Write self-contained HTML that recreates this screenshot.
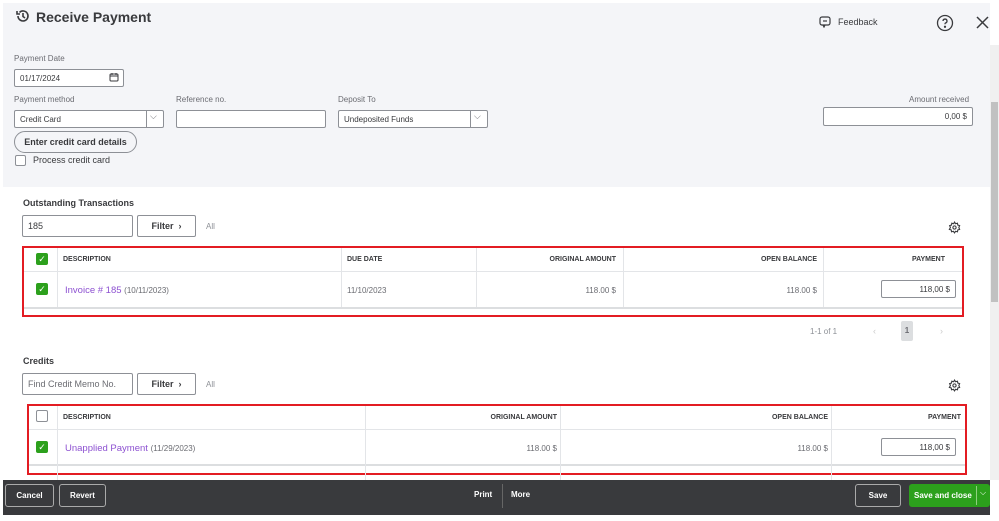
<!DOCTYPE html>
<html><head><meta charset="utf-8"><style>
*{box-sizing:border-box;margin:0;padding:0}
body{width:999px;height:521px;position:relative;overflow:hidden;background:#fff;font-family:"Liberation Sans",sans-serif;color:#393a3d}
.a{position:absolute}
.lbl{font-size:8px;color:#6b6c72}
.inp{position:absolute;background:#fff;border:1px solid #8d9096;border-radius:2px;font-size:8px;color:#393a3d;padding:0 5px;display:flex;align-items:center}
.th{font-size:7px;color:#393a3d;position:absolute;font-weight:bold}
.cb{position:absolute;width:12px;height:12px;border-radius:2px;background:#2ca01c;color:#fff;font-size:9px;line-height:12px;text-align:center}
.vl{position:absolute;width:1px;background:#e3e5e8}
.hl{position:absolute;height:1px;background:#e3e5e8}
.btn{position:absolute;border:1px solid #aaa;border-radius:3px;color:#fff;font-size:8px;font-weight:bold;display:flex;align-items:center;justify-content:center}
</style></head><body>
<div class="a" style="left:3px;top:3px;width:987px;height:184px;background:#f4f5f8"></div>
<div class="a" style="left:990px;top:45px;width:9px;height:435px;background:#f0f0f0"></div>
<div class="a" style="left:991px;top:102px;width:7px;height:200px;background:#c1c1c1"></div>
<svg class="a" style="left:15px;top:8px" width="16" height="16" viewBox="0 0 16 16" fill="none" stroke="#393a3d" stroke-width="1.6"><path d="M3 8a5 5 0 1 0 1.5-3.6"/><path d="M2 3v3h3"/><path d="M8 5v3.5l2 1.5"/></svg>
<div class="a" style="left:36px;top:9px;font-size:14px;font-weight:bold;color:#393a3d">Receive Payment</div>
<svg class="a" style="left:819px;top:16px" width="12" height="12" viewBox="0 0 12 12" fill="none" stroke="#393a3d" stroke-width="1.2"><rect x="1" y="1" width="10" height="8" rx="2"/><path d="M4 9l1 2 1-2"/><path d="M4 5h4"/></svg>
<div class="a" style="left:838px;top:17px;font-size:9px">Feedback</div>
<svg class="a" style="left:936px;top:14px" width="18" height="18" viewBox="0 0 18 18" fill="none" stroke="#393a3d" stroke-width="1.3"><circle cx="9" cy="9" r="7.5"/><path d="M7 7a2 2 0 1 1 2.5 2c-.5.2-.5.6-.5 1.2"/><circle cx="9" cy="12.8" r=".5" fill="#393a3d"/></svg>
<svg class="a" style="left:976px;top:16px" width="13" height="13" viewBox="0 0 13 13" stroke="#393a3d" stroke-width="1.5"><path d="M1 1l11 11M12 1L1 12"/></svg>

<div class="a lbl" style="left:14px;top:54px">Payment Date</div>
<div class="inp" style="left:14px;top:69px;width:110px;height:18px">01/17/2024</div>
<svg class="a" style="left:109px;top:72px" width="10" height="10" viewBox="0 0 10 10" fill="none" stroke="#393a3d"><rect x="1" y="2" width="8" height="7" rx="1"/><path d="M1 4h8M3 1v2M7 1v2"/></svg>
<div class="a lbl" style="left:14px;top:95px">Payment method</div>
<div class="inp" style="left:14px;top:110px;width:150px;height:18px">Credit Card</div>
<div class="a" style="left:146px;top:111px;width:1px;height:16px;background:#8d9096"></div>
<div class="a" style="left:150px;top:111px;font-size:9px;color:#6b6c72">⌵</div>
<div class="a lbl" style="left:176px;top:95px">Reference no.</div>
<div class="inp" style="left:176px;top:110px;width:150px;height:18px"></div>
<div class="a lbl" style="left:338px;top:95px">Deposit To</div>
<div class="inp" style="left:338px;top:110px;width:150px;height:18px">Undeposited Funds</div>
<div class="a" style="left:470px;top:111px;width:1px;height:16px;background:#8d9096"></div>
<div class="a" style="left:474px;top:111px;font-size:9px;color:#6b6c72">⌵</div>
<div class="a" style="left:14px;top:131px;width:123px;height:22px;border:1px solid #8d9096;border-radius:11px;font-size:9px;font-weight:bold;display:flex;align-items:center;justify-content:center;background:#f4f5f8">Enter credit card details</div>
<div class="a" style="left:15px;top:155px;width:11px;height:11px;border:1px solid #8d9096;border-radius:2px;background:#fff"></div>
<div class="a" style="left:33px;top:155px;font-size:9px">Process credit card</div>
<div class="a lbl" style="left:909px;top:95px">Amount received</div>
<div class="inp" style="left:823px;top:107px;width:150px;height:19px;justify-content:flex-end">0,00 $</div>

<div class="a" style="left:23px;top:198px;font-size:9px;font-weight:bold">Outstanding Transactions</div>
<div class="inp" style="left:22px;top:215px;width:111px;height:22px;font-size:9px">185</div>
<div class="inp" style="left:137px;top:215px;width:59px;height:22px;font-size:9px;justify-content:center;font-weight:bold">Filter &nbsp;›</div>
<div class="a" style="left:206px;top:222px;font-size:8px;color:#8d9096">All</div>
<svg class="a" style="left:948px;top:221px" width="13" height="13" viewBox="0 0 24 24" fill="none" stroke="#393a3d" stroke-width="2"><circle cx="12" cy="12" r="3"/><path d="M12 2l2 3 3.5-1 .5 3.5 3.5 1-1.5 3.5 1.5 3.5-3.5 1-.5 3.5-3.5-1-2 3-2-3-3.5 1-.5-3.5-3.5-1L4.5 12 3 8.5l3.5-1L7 4l3.5 1z"/></svg>
<div class="a" style="left:22px;top:246px;width:942px;height:71px;border:2px solid #e31c23"></div>
<div class="hl" style="left:24px;top:271px;width:938px"></div>
<div class="a" style="left:24px;top:307px;width:938px;height:2px;background:#dcdee0"></div>
<div class="vl" style="left:57px;top:248px;height:59px"></div>
<div class="vl" style="left:341px;top:248px;height:59px"></div>
<div class="vl" style="left:476px;top:248px;height:59px"></div>
<div class="vl" style="left:623px;top:248px;height:59px"></div>
<div class="vl" style="left:823px;top:248px;height:59px"></div>
<div class="cb" style="left:36px;top:253px">✓</div>
<div class="th" style="left:63px;top:256px">DESCRIPTION</div>
<div class="th" style="left:347px;top:256px">DUE DATE</div>
<div class="th" style="right:383px;top:256px">ORIGINAL AMOUNT</div>
<div class="th" style="right:182px;top:256px">OPEN BALANCE</div>
<div class="th" style="right:54px;top:256px">PAYMENT</div>
<div class="cb" style="left:36px;top:283px">✓</div>
<div class="a" style="left:65px;top:285px;font-size:9.5px;color:#8d51d1">Invoice # 185 <span style="font-size:8px;color:#6b6c72">(10/11/2023)</span></div>
<div class="a" style="left:347px;top:286px;font-size:8px;color:#6b6c72">11/10/2023</div>
<div class="a" style="right:383px;top:286px;font-size:8px;color:#6b6c72">118.00 $</div>
<div class="a" style="right:182px;top:286px;font-size:8px;color:#6b6c72">118.00 $</div>
<div class="inp" style="left:881px;top:280px;width:75px;height:18px;justify-content:flex-end">118,00 $</div>
<div class="a" style="left:810px;top:327px;font-size:8px;color:#8d9096">1-1 of 1</div>
<div class="a" style="left:873px;top:326px;font-size:9px;color:#ccc">‹</div>
<div class="a" style="left:901px;top:321px;width:12px;height:20px;background:#dcdee0;border-radius:2px;font-size:8px;font-weight:bold;color:#6b6c72;text-align:center;line-height:20px">1</div>
<div class="a" style="left:940px;top:326px;font-size:9px;color:#ccc">›</div>

<div class="a" style="left:23px;top:356px;font-size:9px;font-weight:bold">Credits</div>
<div class="inp" style="left:22px;top:373px;width:111px;height:22px;font-size:9px;color:#6b6c72">Find Credit Memo No.</div>
<div class="inp" style="left:137px;top:373px;width:59px;height:22px;font-size:9px;justify-content:center;font-weight:bold">Filter &nbsp;›</div>
<div class="a" style="left:206px;top:380px;font-size:8px;color:#8d9096">All</div>
<svg class="a" style="left:948px;top:379px" width="13" height="13" viewBox="0 0 24 24" fill="none" stroke="#393a3d" stroke-width="2"><circle cx="12" cy="12" r="3"/><path d="M12 2l2 3 3.5-1 .5 3.5 3.5 1-1.5 3.5 1.5 3.5-3.5 1-.5 3.5-3.5-1-2 3-2-3-3.5 1-.5-3.5-3.5-1L4.5 12 3 8.5l3.5-1L7 4l3.5 1z"/></svg>
<div class="a" style="left:27px;top:404px;width:940px;height:71px;border:2px solid #e31c23"></div>
<div class="hl" style="left:29px;top:429px;width:936px"></div>
<div class="a" style="left:29px;top:464px;width:936px;height:2px;background:#dcdee0"></div>
<div class="vl" style="left:57px;top:406px;height:74px"></div>
<div class="vl" style="left:365px;top:406px;height:74px"></div>
<div class="vl" style="left:560px;top:406px;height:74px"></div>
<div class="vl" style="left:831px;top:406px;height:74px"></div>
<div class="a" style="left:36px;top:410px;width:12px;height:12px;border:1px solid #8d9096;border-radius:2px;background:#fff"></div>
<div class="th" style="left:63px;top:414px">DESCRIPTION</div>
<div class="th" style="right:442px;top:414px">ORIGINAL AMOUNT</div>
<div class="th" style="right:171px;top:414px">OPEN BALANCE</div>
<div class="th" style="right:38px;top:414px">PAYMENT</div>
<div class="cb" style="left:36px;top:441px">✓</div>
<div class="a" style="left:65px;top:443px;font-size:9.5px;color:#8d51d1">Unapplied Payment <span style="font-size:8px;color:#6b6c72">(11/29/2023)</span></div>
<div class="a" style="right:442px;top:444px;font-size:8px;color:#6b6c72">118.00 $</div>
<div class="a" style="right:171px;top:444px;font-size:8px;color:#6b6c72">118.00 $</div>
<div class="inp" style="left:881px;top:438px;width:75px;height:18px;justify-content:flex-end">118,00 $</div>

<div class="a" style="left:3px;top:480px;width:987px;height:35px;background:#393a3d"></div>
<div class="btn" style="left:5px;top:484px;width:49px;height:23px">Cancel</div>
<div class="btn" style="left:59px;top:484px;width:47px;height:23px">Revert</div>
<div class="a" style="left:474px;top:490px;font-size:8px;font-weight:bold;color:#fff">Print</div>
<div class="a" style="left:502px;top:484px;width:1px;height:24px;background:#666"></div>
<div class="a" style="left:511px;top:490px;font-size:8px;font-weight:bold;color:#fff">More</div>
<div class="btn" style="left:855px;top:484px;width:46px;height:23px">Save</div>
<div class="a" style="left:909px;top:484px;width:81px;height:23px;background:#2ca01c;border-radius:3px"></div>
<div class="a" style="left:914px;top:491px;font-size:8px;font-weight:bold;color:#fff">Save and close</div>
<div class="a" style="left:976px;top:486px;width:1px;height:19px;background:#8fd07f"></div>
<div class="a" style="left:980px;top:488px;font-size:8px;color:#fff">⌵</div>
</body></html>
